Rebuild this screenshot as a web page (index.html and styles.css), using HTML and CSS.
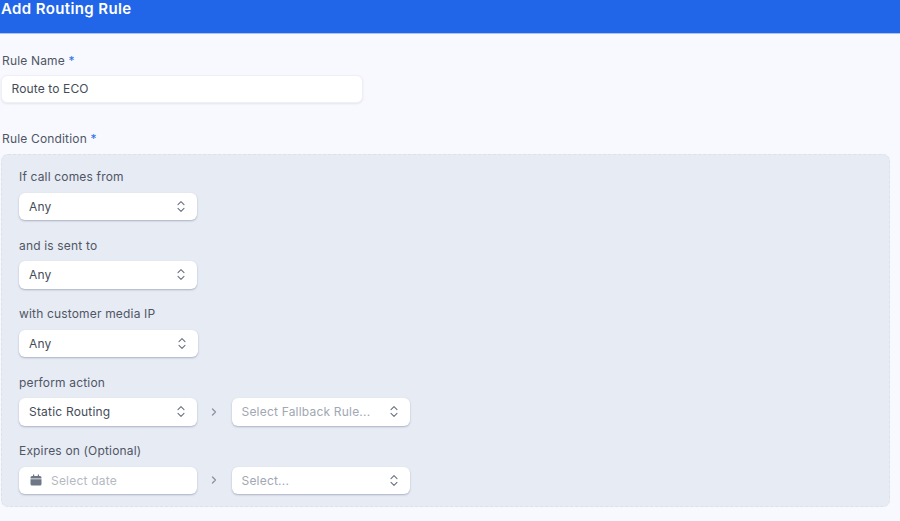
FILE: index.html
```html
<!DOCTYPE html>
<html lang="en">
<head>
<meta charset="utf-8">
<title>Add Routing Rule</title>
<link rel="stylesheet" href="styles.css">
</head>
<body>
<svg class="defs" width="0" height="0" aria-hidden="true">
  <symbol id="updown" viewBox="0 0 8 13"><path d="M1 4.6 4 1.6l3 3M1 8.4l3 3 3-3" fill="none" stroke="currentColor" stroke-width="1.1" stroke-linecap="round" stroke-linejoin="round"/></symbol>
</svg>
<header class="topbar"><h1 class="title">Add Routing Rule</h1></header>
<main class="content">
  <div class="label">Rule Name <span class="req">*</span></div>
  <div class="text-input">Route to ECO</div>
  <div class="label label-condition">Rule Condition <span class="req">*</span></div>
  <section class="panel">
    <div class="field">
      <div class="label">If call comes from</div>
      <div class="row"><div class="select"><span>Any</span><svg class="chev"><use href="#updown"/></svg></div></div>
    </div>
    <div class="field">
      <div class="label">and is sent to</div>
      <div class="row"><div class="select"><span>Any</span><svg class="chev"><use href="#updown"/></svg></div></div>
    </div>
    <div class="field">
      <div class="label">with customer media IP</div>
      <div class="row"><div class="select select-wide"><span>Any</span><svg class="chev"><use href="#updown"/></svg></div></div>
    </div>
    <div class="field">
      <div class="label">perform action</div>
      <div class="row">
        <div class="select"><span>Static Routing</span><svg class="chev"><use href="#updown"/></svg></div>
        <svg class="arrow" viewBox="0 0 6 8"><path d="M1.5 1 4.5 4l-3 3" fill="none" stroke="currentColor" stroke-width="1.3" stroke-linecap="round" stroke-linejoin="round"/></svg>
        <div class="select placeholder"><span>Select Fallback Rule...</span><svg class="chev"><use href="#updown"/></svg></div>
      </div>
    </div>
    <div class="field">
      <div class="label">Expires on (Optional)</div>
      <div class="row">
        <div class="select date">
          <svg class="cal" viewBox="0 0 12 12"><path d="M3 0.5h1.2V2h3.6V0.5H9V2h1a1.5 1.5 0 0 1 1.5 1.5V4.4H.5V3.5A1.5 1.5 0 0 1 2 2h1zM.5 5.2h11V10A1.5 1.5 0 0 1 10 11.5H2A1.5 1.5 0 0 1 .5 10z" fill="currentColor"/></svg>
          <span>Select date</span>
        </div>
        <svg class="arrow" viewBox="0 0 6 8"><path d="M1.5 1 4.5 4l-3 3" fill="none" stroke="currentColor" stroke-width="1.3" stroke-linecap="round" stroke-linejoin="round"/></svg>
        <div class="select placeholder"><span>Select...</span><svg class="chev"><use href="#updown"/></svg></div>
      </div>
    </div>
  </section>
</main>
</body>
</html>
```
FILE: styles.css
```css
* { box-sizing: border-box; }
html, body { margin: 0; height: 100%; overflow: hidden; }
body {
  background: #f8f9fe;
  color: #4b5563;
  font-family: Inter, "Liberation Sans", sans-serif;
  font-size: 12px;
  letter-spacing: 0.2px;
}
.defs { position: absolute; }
.topbar {
  height: 34px;
  background: #2166e8;
  border-bottom: 1px solid #a9c3f3;
  padding-left: 1px;
}
.title {
  margin: 0;
  color: #fff;
  font-size: 15px;
  font-weight: 600;
  line-height: 18px;
  letter-spacing: 0.38px;
}
.content { padding: 18.5px 10px 0 1px; }
.label {
  line-height: 15px;
  margin-left: 1px;
  height: 15px;
  letter-spacing: 0.17px;
  color: #4f5665;
}
.req { color: #2f6fe8; }
.text-input {
  width: 362px;
  height: 28px;
  margin-top: 7.5px;
  padding-left: 9.5px;
  background: #fff;
  border: 1px solid #eef0f6;
  border-radius: 6px;
  line-height: 26px;
  color: #454c59;
  letter-spacing: 0.13px;
  box-shadow: 0 1px 2px rgba(80, 90, 120, 0.12);
}
.label-condition { margin-top: 28px; }
.panel {
  height: 353px;
  margin-top: 8px;
  padding: 14px 17px 0;
  background: #e7ebf4;
  border: 1px dashed #dde1eb;
  border-radius: 7px;
}
.field { margin-bottom: 17.5px; }
.field .label { margin-left: 0; }
.row {
  display: flex;
  align-items: center;
  margin-top: 8.5px;
}
.select {
  display: flex;
  align-items: center;
  justify-content: space-between;
  width: 178px;
  height: 27.5px;
  padding: 0 12px 0 10px;
  background: #fff;
  border-radius: 6px;
  color: #454c59;
  box-shadow: 0 1px 2px rgba(60, 70, 100, 0.35);
}
.select-wide { width: 179px; }
.placeholder { padding-left: 9.5px; color: #a1a7b3; }
.chev { width: 8px; height: 13px; color: #6b7280; }
.arrow { width: 6px; height: 8px; margin: 0 15px 0 14px; color: #8b93a3; }
.date { justify-content: flex-start; padding-left: 11px; color: #b5b9c2; }
.cal { width: 12px; height: 12px; margin-right: 9px; color: #6f7686; }
```
